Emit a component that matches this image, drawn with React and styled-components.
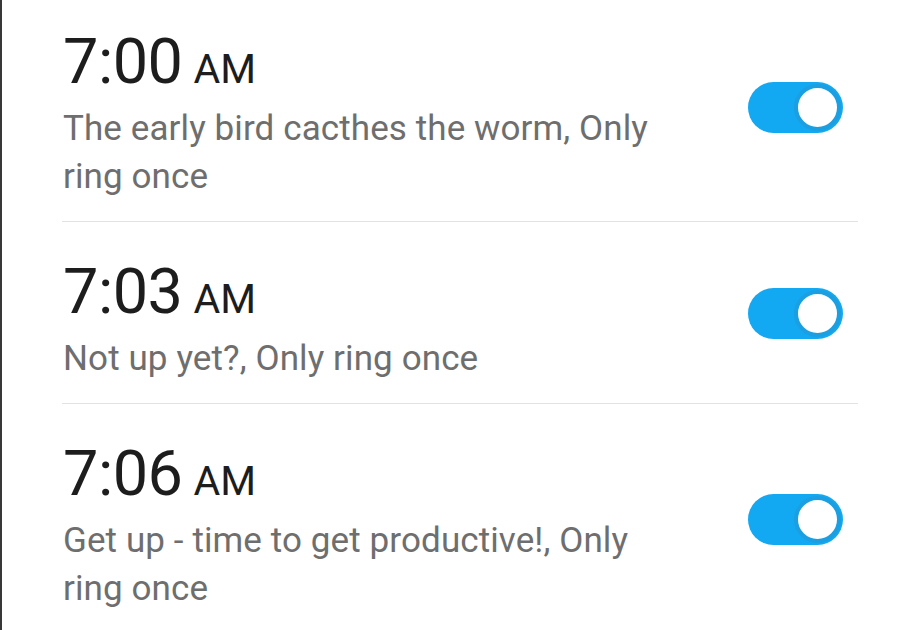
import React, { useState } from "react";
import styled, { createGlobalStyle } from "styled-components";

const GlobalStyle = createGlobalStyle`
  html, body {
    margin: 0;
    padding: 0;
    height: 100%;
    overflow: hidden;
    background: #ffffff;
  }

  body {
    border-left: 2px solid #383838;
    box-sizing: border-box;
    font-family: Roboto, "Noto Sans", "Liberation Sans", sans-serif;
  }
`;

const AlarmList = styled.ul`
  margin: -8px 0 0;
  padding: 0 58px 0 60px;
  list-style: none;
`;

const AlarmRow = styled.li`
  display: flex;
  align-items: center;
  gap: 24px;

  padding: 30px 15px 20px 1px;

  & + & {
    border-top: 1px solid #e2e2e2;
  }
`;

const AlarmInfo = styled.div`
  flex: 1;
  min-width: 0;
`;

const AlarmTime = styled.div`
  margin-top: 2px;

  color: #1d1d1d;
  font-size: 63px;
  line-height: 76px;
  letter-spacing: -0.5px;

  span {
    margin-left: 11px;
    font-size: 41px;
    letter-spacing: 0;
  }
`;

const AlarmLabel = styled.p`
  max-width: 630px;
  margin: -2px 0 0;

  color: #6e6e6e;
  font-size: 35px;
  line-height: 48px;
  letter-spacing: 0.1px;
`;

const Switch = styled.button`
  position: relative;
  flex: 0 0 auto;

  width: 95px;
  height: 51px;
  margin-bottom: 9px;
  padding: 0;

  border: 0;
  border-radius: 26px;
  background: ${({ $on }) => ($on ? "#12a8f2" : "#cfcfcf")};
  cursor: pointer;

  &::after {
    content: "";
    position: absolute;
    top: 2px;
    left: ${({ $on }) => ($on ? "46px" : "2px")};

    width: 47px;
    height: 47px;
    box-sizing: border-box;

    border: 4px solid ${({ $on }) => ($on ? "#1b9fe0" : "#bdbdbd")};
    border-radius: 50%;
    background: #ffffff;
  }
`;

const alarms = [
  { id: 1, time: "7:00", period: "AM", label: "The early bird cacthes the worm, Only ring once" },
  { id: 2, time: "7:03", period: "AM", label: "Not up yet?, Only ring once" },
  { id: 3, time: "7:06", period: "AM", label: "Get up - time to get productive!, Only ring once" },
];

export default function App() {
  const [enabled, setEnabled] = useState({ 1: true, 2: true, 3: true });

  return (
    <>
      <GlobalStyle />
      <AlarmList>
        {alarms.map((alarm) => (
          <AlarmRow key={alarm.id}>
            <AlarmInfo>
              <AlarmTime>
                {alarm.time}
                <span>{alarm.period}</span>
              </AlarmTime>
              <AlarmLabel>{alarm.label}</AlarmLabel>
            </AlarmInfo>
            <Switch
              type="button"
              aria-label={`Alarm ${alarm.time} ${alarm.period}`}
              $on={enabled[alarm.id]}
              onClick={() =>
                setEnabled((prev) => ({ ...prev, [alarm.id]: !prev[alarm.id] }))
              }
            />
          </AlarmRow>
        ))}
      </AlarmList>
    </>
  );
}
